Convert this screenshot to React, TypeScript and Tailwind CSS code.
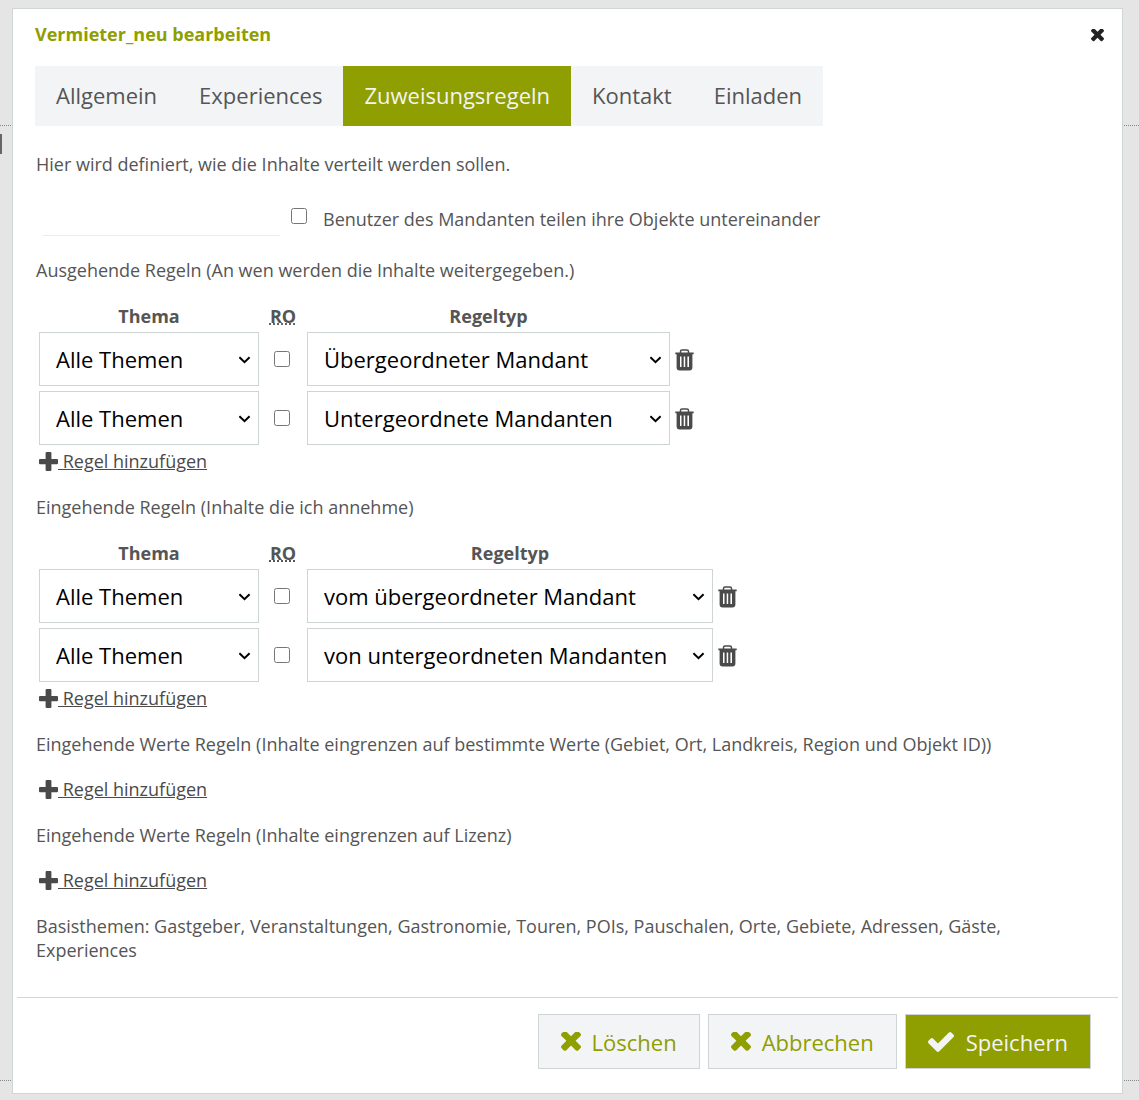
import { useState } from 'react';

import { clsx } from 'clsx';

type Rule = {
  id: number;
  theme: string;
  readOnly: boolean;
  type: string;
};

type IconProps = {
  className?: string;
};

const TABS = ['Allgemein', 'Experiences', 'Zuweisungsregeln', 'Kontakt', 'Einladen'];

const THEMES = ['Alle Themen', 'Gastgeber', 'Touren', 'POIs'];

const OUTGOING_TYPES = ['Übergeordneter Mandant', 'Untergeordnete Mandanten'];

const INCOMING_TYPES = ['vom übergeordneter Mandant', 'von untergeordneten Mandanten'];

const CloseIcon = ({ className }: IconProps) => (
  <svg viewBox="302 434 1188 1188" fill="currentColor" className={className} aria-hidden="true">
    <path d="M1490 1322q0 40-28 68l-136 136q-28 28-68 28t-68-28l-294-294-294 294q-28 28-68 28t-68-28l-136-136q-28-28-28-68t28-68l294-294-294-294q-28-28-28-68t28-68l136-136q28-28 68-28t68 28l294 294 294-294q28-28 68-28t68 28l136 136q28 28 28 68t-28 68l-294 294 294 294q28 28 28 68z" />
  </svg>
);

const CheckIcon = ({ className }: IconProps) => (
  <svg viewBox="121 334 1550 1188" fill="currentColor" className={className} aria-hidden="true">
    <path d="M1671 566q0 40-28 68l-724 724-136 136q-28 28-68 28t-68-28l-136-136-362-362q-28-28-28-68t28-68l136-136q28-28 68-28t68 28l294 295 656-657q28-28 68-28t68 28l136 136q28 28 28 68z" />
  </svg>
);

const PlusIcon = ({ className }: IconProps) => (
  <svg viewBox="0 0 19 19" fill="currentColor" className={className} aria-hidden="true">
    <path d="M7.6 0h3.8q1 0 1 1v5.9H18q1 0 1 1v3.4q0 1-1 1h-5.6V18q0 1-1 1H7.6q-1 0-1-1v-5.7H1q-1 0-1-1V7.9q0-1 1-1h5.6V1q0-1 1-1z" />
  </svg>
);

const ChevronIcon = ({ className }: IconProps) => (
  <svg viewBox="0 0 12 8" fill="none" className={className} aria-hidden="true">
    <path d="M.4 1.2 5.5 6.2l5.1-5" stroke="currentColor" strokeWidth="2" />
  </svg>
);

const TrashIcon = ({ className }: IconProps) => (
  <svg viewBox="0 0 19 22" fill="none" className={className} aria-hidden="true">
    <path d="M5.5 4V2.6q0-1.600 1.600-1.600h4.800q1.600 0 1.600 1.600V4" stroke="currentColor" strokeWidth="1.5" />
    <path
      fill="currentColor"
      fillRule="evenodd"
      d="M.3 3.5h18.400v1.700h-1.300V18.500q0 3-3 3H4.600q-3 0-3-3V5.200H.3zM5 7.500V18h1.500V7.500zm3.700 0V18h1.500V7.500zm3.700 0V18H14V7.500z"
    />
  </svg>
);

const SelectField = ({
  label,
  value,
  options,
  onChange,
  className,
}: {
  label: string;
  value: string;
  options: string[];
  onChange: (value: string) => void;
  className: string;
}) => (
  <div className={clsx('relative', className)}>
    <select
      aria-label={label}
      value={value}
      onChange={(e) => onChange(e.target.value)}
      className="block h-[54px] w-full appearance-none border border-[#cfd4d4] bg-white pl-4 text-[22px] leading-8 text-black"
    >
      {options.map((option) => (
        <option key={option}>{option}</option>
      ))}
    </select>
    <ChevronIcon className="pointer-events-none absolute top-6 right-2 h-2 w-3 text-black" />
  </div>
);

const RuleTable = ({
  label,
  initialRules,
  types,
  typeClassName,
}: {
  label: string;
  initialRules: Rule[];
  types: string[];
  typeClassName: string;
}) => {
  const [rules, setRules] = useState(initialRules);

  const updateRule = (id: number, changes: Partial<Rule>) => {
    setRules((prev) => prev.map((rule) => (rule.id === id ? { ...rule, ...changes } : rule)));
  };

  const removeRule = (id: number) => {
    setRules((prev) => prev.filter((rule) => rule.id !== id));
  };

  return (
    <table className="border-separate border-spacing-x-[2px] border-spacing-y-[3px]" aria-label={label}>
      <thead>
        <tr>
          <th className="p-0">Thema</th>
          <th className="p-0">
            <abbr title="Read only">RO</abbr>
          </th>
          <th className="p-0">Regeltyp</th>
          <th className="p-0" />
        </tr>
      </thead>
      <tbody>
        {rules.map((rule) => (
          <tr key={rule.id}>
            <td className="p-px">
              <SelectField
                label="Thema"
                value={rule.theme}
                options={THEMES}
                onChange={(theme) => updateRule(rule.id, { theme })}
                className="w-[220px]"
              />
            </td>
            <td className="pr-[14px] pl-3">
              <input
                type="checkbox"
                aria-label="RO"
                checked={rule.readOnly}
                onChange={(e) => updateRule(rule.id, { readOnly: e.target.checked })}
                className="block size-4"
              />
            </td>
            <td className="p-px">
              <SelectField
                label="Regeltyp"
                value={rule.type}
                options={types}
                onChange={(type) => updateRule(rule.id, { type })}
                className={typeClassName}
              />
            </td>
            <td className="p-px">
              <button
                type="button"
                aria-label="Regel löschen"
                onClick={() => removeRule(rule.id)}
                className="ml-px block cursor-pointer pt-px text-[#4a4a4a]"
              >
                <TrashIcon className="h-[22px] w-[19px]" />
              </button>
            </td>
          </tr>
        ))}
      </tbody>
    </table>
  );
};

const AddRuleLink = () => (
  <a href="#" className="mb-[22px] ml-[3px] flex w-fit items-center text-[#4a4a4a]">
    <PlusIcon className="size-[19px]" />
    <span className="whitespace-pre underline"> Regel hinzufügen</span>
  </a>
);

export default function App() {
  const [activeTab, setActiveTab] = useState('Zuweisungsregeln');

  return (
    <div className="relative min-h-screen bg-[#e5e5e5] pt-2 pr-4 pb-1 pl-3 font-['Open_Sans',sans-serif] text-[18px] leading-6 text-[#555]">
      {/* Page behind the dialog */}
      <div className="absolute inset-0 flex flex-col overflow-hidden" aria-hidden="true">
        <div className="h-[126px] border-b border-dotted border-[#888]" />
        <div className="flex-1 border-b border-dotted border-[#888] pt-2">
          <div className="h-5 w-[2px] bg-[#666]" />
        </div>
        <div className="h-[19px]" />
      </div>

      <div
        role="dialog"
        aria-labelledby="dialog-title"
        className="relative border border-[#d0d5d5] bg-white"
      >
        <header className="flex items-center justify-between pt-[13px] pr-[18px] pl-[22px]">
          <h1 id="dialog-title" className="font-bold text-[#8f9e00]">
            Vermieter_neu bearbeiten
          </h1>
          <button type="button" aria-label="Schließen" className="cursor-pointer pt-[2px] text-[#222]">
            <CloseIcon className="size-[13px]" />
          </button>
        </header>

        <div className="pt-5 pr-[100px] pb-[14px] pl-[22px]">
          <div role="tablist" className="flex w-fit bg-[#f3f4f6] text-[22px]">
            {TABS.map((tab) => (
              <button
                key={tab}
                type="button"
                role="tab"
                aria-selected={tab === activeTab}
                onClick={() => setActiveTab(tab)}
                className="h-[60px] cursor-pointer px-[21px] pb-[2px] aria-selected:bg-[#8f9e00] aria-selected:text-[#f3f4f6]"
              >
                {tab}
              </button>
            ))}
          </div>

          <div className="mt-[26px] pl-px">
            <p>Hier wird definiert, wie die Inhalte verteilt werden sollen.</p>

            <div className="mt-6 mb-[22px] flex h-9 items-stretch pl-[7px]">
              <div className="w-[237px] border-b border-[#ececec]" />
              <label className="flex pt-[7px] pl-[11px]">
                <input type="checkbox" className="mt-px mr-4 size-4" />
                Benutzer des Mandanten teilen ihre Objekte untereinander
              </label>
            </div>

            <p className="mb-[19px]">Ausgehende Regeln (An wen werden die Inhalte weitergegeben.)</p>
            <RuleTable
              label="Ausgehende Regeln"
              types={OUTGOING_TYPES}
              typeClassName="w-[363px]"
              initialRules={[
                { id: 1, theme: 'Alle Themen', readOnly: false, type: OUTGOING_TYPES[0] },
                { id: 2, theme: 'Alle Themen', readOnly: false, type: OUTGOING_TYPES[1] },
              ]}
            />
            <AddRuleLink />

            <p className="mb-[19px]">Eingehende Regeln (Inhalte die ich annehme)</p>
            <RuleTable
              label="Eingehende Regeln"
              types={INCOMING_TYPES}
              typeClassName="w-[406px]"
              initialRules={[
                { id: 1, theme: 'Alle Themen', readOnly: false, type: INCOMING_TYPES[0] },
                { id: 2, theme: 'Alle Themen', readOnly: false, type: INCOMING_TYPES[1] },
              ]}
            />
            <AddRuleLink />

            <p className="mb-[21px]">
              Eingehende Werte Regeln (Inhalte eingrenzen auf bestimmte Werte (Gebiet, Ort, Landkreis,
              Region und Objekt ID))
            </p>
            <AddRuleLink />

            <p className="mb-[21px]">Eingehende Werte Regeln (Inhalte eingrenzen auf Lizenz)</p>
            <AddRuleLink />

            <p className="mb-[21px]">
              Basisthemen: Gastgeber, Veranstaltungen, Gastronomie, Touren, POIs, Pauschalen, Orte,
              Gebiete, Adressen, Gäste, Experiences
            </p>
          </div>
        </div>

        <footer className="mx-1 flex justify-end gap-2 border-t border-[#d0d5d5] pt-4 pr-[27px] pb-6 text-[22px]">
          <button
            type="button"
            className="flex h-[55px] cursor-pointer items-center gap-[11px] border border-[#cfd4d4] bg-[#f3f4f6] px-[22px] text-[#8f9e00]"
          >
            <CloseIcon className="size-5" />
            Löschen
          </button>
          <button
            type="button"
            className="flex h-[55px] cursor-pointer items-center gap-[11px] border border-[#cfd4d4] bg-[#f3f4f6] px-[22px] text-[#8f9e00]"
          >
            <CloseIcon className="size-5" />
            Abbrechen
          </button>
          <button
            type="button"
            className="flex h-[55px] cursor-pointer items-center gap-3 border border-[#cfd4d4] bg-[#8f9e00] px-[22px] text-[#f3f4f6]"
          >
            <CheckIcon className="h-5 w-[26px]" />
            Speichern
          </button>
        </footer>
      </div>
    </div>
  );
}
